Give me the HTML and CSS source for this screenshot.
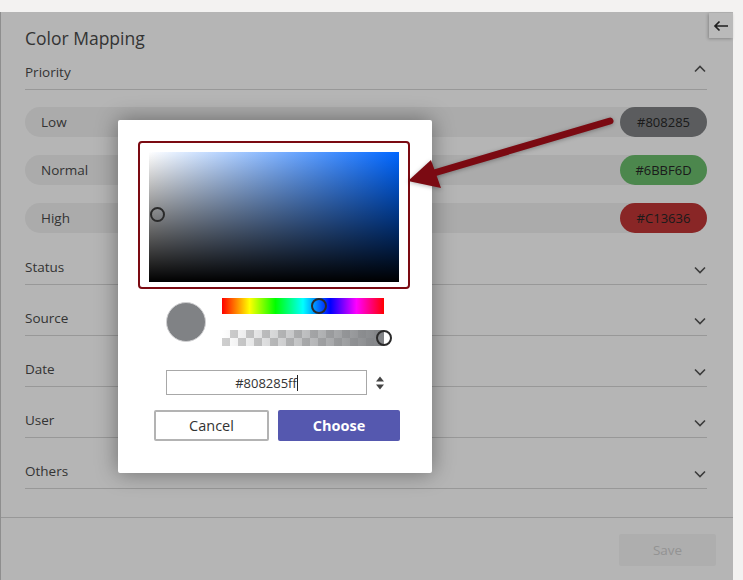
FILE: index.html
```html
<!DOCTYPE html>
<html>
<head>
<meta charset="utf-8">
<link rel="stylesheet" href="styles.css">
</head>
<body>
<div class="app">
  <div class="panel">
    <div class="panel-body">
      <div class="title">Color Mapping</div>
      <div class="section-head first">
        <span>Priority</span>
        <svg class="chev" width="12" height="8" viewBox="0 0 12 8"><path d="M1 6.5 L6 1.5 L11 6.5" fill="none" stroke="#555" stroke-width="1.6"/></svg>
      </div>
      <div class="pills">
        <div class="pill"><span>Low</span><span class="chip" style="background:#808285">#808285</span></div>
        <div class="pill"><span>Normal</span><span class="chip" style="background:#6BBF6D">#6BBF6D</span></div>
        <div class="pill"><span>High</span><span class="chip" style="background:#C13636">#C13636</span></div>
      </div>
      <div class="section-head"><span>Status</span><svg class="chev" width="12" height="8" viewBox="0 0 12 8"><path d="M1 1.5 L6 6.5 L11 1.5" fill="none" stroke="#555" stroke-width="1.6"/></svg></div>
      <div class="section-head"><span>Source</span><svg class="chev" width="12" height="8" viewBox="0 0 12 8"><path d="M1 1.5 L6 6.5 L11 1.5" fill="none" stroke="#555" stroke-width="1.6"/></svg></div>
      <div class="section-head"><span>Date</span><svg class="chev" width="12" height="8" viewBox="0 0 12 8"><path d="M1 1.5 L6 6.5 L11 1.5" fill="none" stroke="#555" stroke-width="1.6"/></svg></div>
      <div class="section-head"><span>User</span><svg class="chev" width="12" height="8" viewBox="0 0 12 8"><path d="M1 1.5 L6 6.5 L11 1.5" fill="none" stroke="#555" stroke-width="1.6"/></svg></div>
      <div class="section-head"><span>Others</span><svg class="chev" width="12" height="8" viewBox="0 0 12 8"><path d="M1 1.5 L6 6.5 L11 1.5" fill="none" stroke="#555" stroke-width="1.6"/></svg></div>
    </div>
    <div class="footer">
      <button class="save">Save</button>
    </div>
    <div class="overlay"></div>
    <div class="back">
      <svg width="16" height="12" viewBox="0 0 16 12"><path d="M15 6 H2 M6.5 1.5 L2 6 L6.5 10.5" fill="none" stroke="#1f1f1f" stroke-width="1.7"/></svg>
    </div>
  </div>

  <div class="dialog">
    <div class="highlight">
      <div class="sv">
        <span class="sv-thumb"></span>
      </div>
    </div>
    <div class="controls">
      <div class="swatch"></div>
      <div class="sliders">
        <div class="hue"><span class="thumb hue-thumb"></span></div>
        <div class="alpha"><span class="thumb alpha-thumb"></span></div>
      </div>
    </div>
    <div class="input-row">
      <div class="hex-input">#808285ff<span class="caret"></span></div>
      <svg class="spin" width="10" height="14" viewBox="0 0 10 14"><path d="M5 0.5 L9 5.5 H1 Z M1 8.5 H9 L5 13.5 Z" fill="#444"/></svg>
    </div>
    <div class="buttons">
      <button class="btn cancel">Cancel</button>
      <button class="btn choose">Choose</button>
    </div>
  </div>

  <svg class="arrow" width="230" height="100" viewBox="0 0 230 100">
    <line x1="210" y1="21" x2="34" y2="73" stroke="#7b0a12" stroke-width="7" stroke-linecap="round"/>
    <polygon points="8,81 31,60 41,88" fill="#7b0a12"/>
  </svg>
</div>
</body>
</html>
```
FILE: styles.css
```css
* { box-sizing: border-box; }
html, body { margin: 0; padding: 0; }
body {
  background: #f3f2f1;
  font-family: "Open Sans", "Noto Sans", sans-serif;
  color: #4a4a4a;
  width: 743px;
  height: 580px;
  overflow: hidden;
}
.app {
  position: relative;
  padding-top: 12px;
  height: 580px;
}
.panel {
  position: relative;
  width: 733px;
  height: 568px;
  background: #fff;
  border-left: 1px solid #c8c8c8;
  display: flex;
  flex-direction: column;
}
.panel-body {
  flex: 1;
  padding: 14px 26px 0 24px;
}
.title {
  font-size: 17.5px;
  line-height: 24px;
  color: #4a4a4a;
}
.section-head {
  display: flex;
  justify-content: space-between;
  align-items: center;
  height: 51px;
  padding-top: 16px;
  border-bottom: 1px solid #d6d6d6;
  font-size: 13.5px;
  color: #4a4a4a;
}
.section-head.first {
  height: 40px;
  padding-top: 5px;
}
.chev { margin-right: 1px; margin-top: 5px; }
.section-head.first .chev { margin-top: -7px; }
.pills {
  display: flex;
  flex-direction: column;
  gap: 18px;
  margin-top: 17px;
  margin-bottom: 1px;
}
.pill {
  display: flex;
  justify-content: space-between;
  align-items: center;
  height: 30px;
  border-radius: 15px;
  background: #f1f1f1;
  padding-left: 16px;
  font-size: 13.5px;
  color: #4a4a4a;
}
.chip {
  width: 87px;
  height: 30px;
  border-radius: 15px;
  display: flex;
  align-items: center;
  justify-content: center;
  font-size: 13px;
  color: #262626;
}
.footer {
  height: 63px;
  border-top: 1px solid #d6d6d6;
  display: flex;
  justify-content: flex-end;
  align-items: flex-start;
  padding: 16px 17px 0 0;
}
.save {
  width: 97px;
  height: 32px;
  border: none;
  border-radius: 2px;
  background: #f6f6f6;
  color: #cfcfcf;
  font-family: inherit;
  font-size: 13.5px;
}
.overlay {
  position: absolute;
  top: 0; bottom: 0; left: -1px; right: 0;
  background: rgba(0, 0, 0, 0.29);
}
.back {
  position: absolute;
  top: 1px;
  right: 0;
  width: 24px;
  height: 25px;
  background: #bababa;
  box-shadow: -1px 1px 3px rgba(0,0,0,0.25);
  display: flex;
  align-items: center;
  justify-content: center;
}
.arrow {
  position: absolute;
  left: 400px;
  top: 100px;
  filter: drop-shadow(0 1px 2px rgba(0,0,0,0.3));
}
.dialog {
  position: absolute;
  left: 118px;
  top: 120px;
  width: 314px;
  height: 353px;
  background: #fff;
  border-radius: 2px;
  box-shadow: 0 0 22px rgba(0,0,0,0.4);
  padding: 21px 0 0 20px;
}
.highlight {
  width: 272px;
  height: 148px;
  border: 2px solid #7b0a12;
  border-radius: 4px;
  padding: 9px 8px 6px 9px;
}
.sv {
  position: relative;
  width: 250px;
  height: 130px;
  background:
    linear-gradient(to top, #000, rgba(0,0,0,0)),
    linear-gradient(to right, #fff, #0066ff);
}
.sv-thumb {
  position: absolute;
  left: 1px;
  top: 55px;
  width: 15px;
  height: 15px;
  border: 2px solid #2a2a2a;
  border-radius: 50%;
}
.controls {
  display: flex;
  align-items: center;
  gap: 16px;
  margin: 9px 0 0 28px;
}
.swatch {
  width: 40px;
  height: 40px;
  border-radius: 50%;
  background: #808285;
  border: 1px solid #d0d0d2;
}
.sliders {
  display: flex;
  flex-direction: column;
  gap: 16px;
  width: 162px;
}
.hue, .alpha {
  position: relative;
  height: 16px;
}
.hue {
  background: linear-gradient(to right, #f00 0%, #ff0 17%, #0f0 33%, #0ff 50%, #00f 67%, #f0f 83%, #f00 100%);
}
.alpha {
  background:
    linear-gradient(to right, rgba(128,130,133,0), #808285),
    repeating-conic-gradient(#cfcfcf 0% 25%, #fff 0% 50%) 0 0 / 16px 16px;
}
.thumb {
  position: absolute;
  top: 0;
  width: 16px;
  height: 16px;
  border: 2px solid #2a2a2a;
  border-radius: 50%;
}
.hue-thumb { left: 89px; }
.alpha-thumb { left: 154px; }
.input-row {
  display: flex;
  align-items: center;
  gap: 8px;
  margin: 24px 0 0 28px;
}
.hex-input {
  width: 201px;
  height: 25px;
  border: 1px solid #a8a8a8;
  display: flex;
  align-items: center;
  justify-content: center;
  font-size: 13px;
  color: #333;
}
.caret {
  display: inline-block;
  width: 1px;
  height: 16px;
  background: #222;
}
.buttons {
  display: flex;
  gap: 9px;
  margin: 15px 0 0 16px;
}
.btn {
  height: 31px;
  font-family: inherit;
  font-size: 14.5px;
  border-radius: 2px;
}
.cancel {
  width: 115px;
  background: #fff;
  border: 2px solid #b3b3b3;
  color: #333;
}
.choose {
  width: 122px;
  background: #5558af;
  border: none;
  color: #fff;
  font-weight: 700;
}
```
